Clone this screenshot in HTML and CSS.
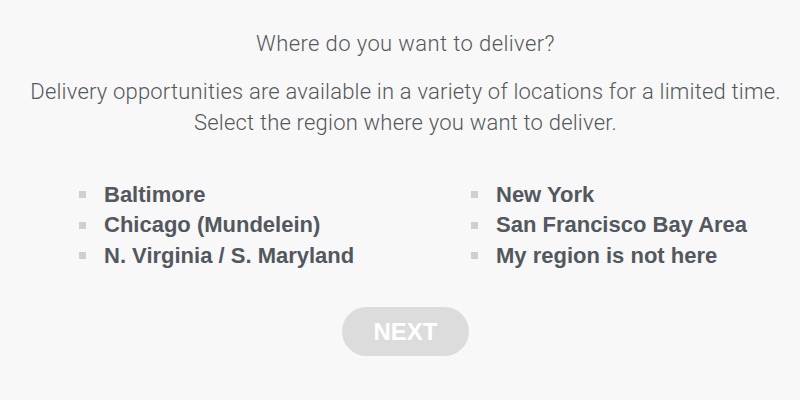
FILE: index.html
```html
<!DOCTYPE html>
<html lang="en">
<head>
  <meta charset="UTF-8">
  <meta name="viewport" content="width=device-width, initial-scale=1.0">
  <title>Choose Region</title>
  <link rel="stylesheet" href="styles.css">
</head>
<body>

  <!-- Pertanyaan wilayah -->
  <div class="region-page">
    <h2 class="title">Where do you want to deliver?</h2>
    <p class="intro">Delivery opportunities are available in a variety of locations for a limited time.<br>Select the region where you want to deliver.</p>

    <ul class="region-list">
      <li>Baltimore</li>
      <li>New York</li>
      <li>Chicago (Mundelein)</li>
      <li>San Francisco Bay Area</li>
      <li>N. Virginia / S. Maryland</li>
      <li>My region is not here</li>
    </ul>

    <button class="btn-next" disabled>NEXT</button>
  </div>

</body>
</html>
```

FILE: styles.css
```css
/* Dasar halaman */
body {
  margin: 0;
  background-color: #f8f8f8;
  font-family: Roboto, "Liberation Sans", sans-serif;
  color: #55585c;
}

.region-page {
  display: flex;
  flex-direction: column;
  align-items: center;
  padding: 30px 0 0 11px;
}

/* Judul */
.title {
  margin: 0;
  font-size: 22px;
  font-weight: 300;
  line-height: 28px;
  letter-spacing: 0.4px;
}

.intro {
  margin: 17.5px 0 0;
  font-size: 22px;
  font-weight: 300;
  line-height: 31px;
  letter-spacing: 0.2px;
  text-align: center;
}

/* Daftar wilayah */
.region-list {
  align-self: stretch;
  display: grid;
  grid-template-columns: 392px 1fr;
  margin: 42px 0 0 68px;
  padding: 0;
  list-style: none;
}

.region-list li {
  display: flex;
  align-items: center;
  gap: 18px;
  height: 30.5px;
  font-family: "Liberation Sans", Arial, sans-serif;
  font-weight: bold;
  font-size: 22px;
  color: #53575e;
}

.region-list li::before {
  content: "";
  width: 7px;
  height: 7px;
  background-color: #cfcfcf;
}

/* Tombol */
.btn-next {
  margin-top: 36px;
  width: 127px;
  height: 49px;
  border: none;
  border-radius: 25px;
  background-color: #dcdcdc;
  color: #fff;
  font-family: "Liberation Sans", Arial, sans-serif;
  font-weight: bold;
  font-size: 24px;
}
```
